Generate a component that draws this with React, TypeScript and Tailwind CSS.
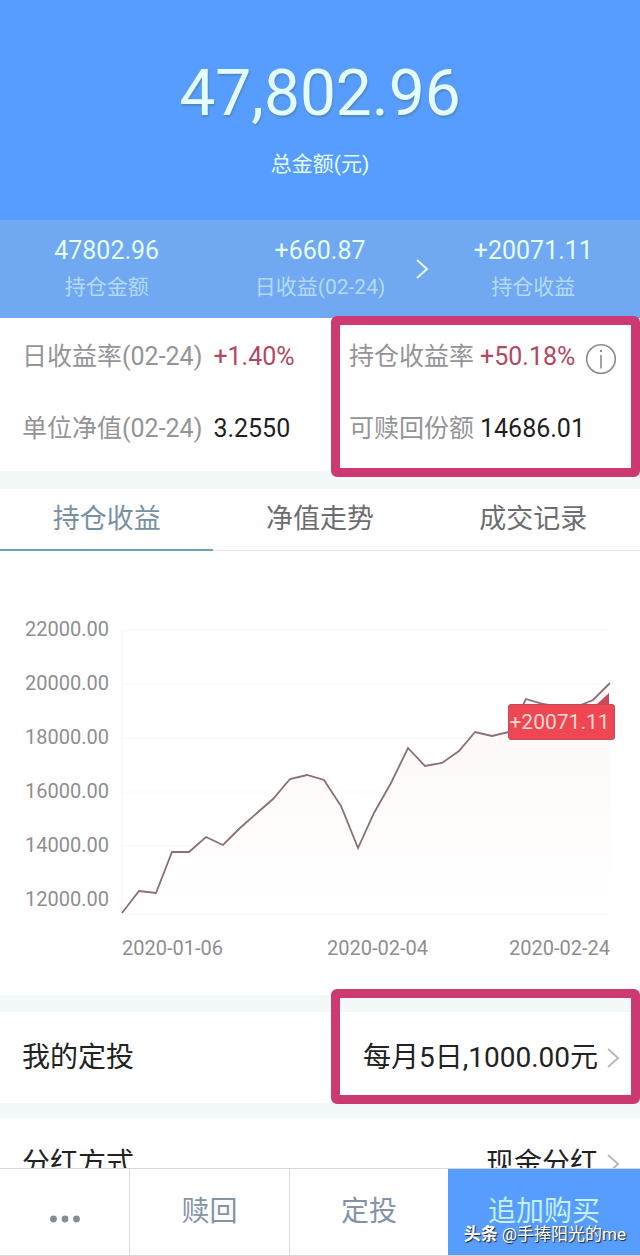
import type { ReactNode } from 'react';

const SUMMARY = [
  { value: '47802.96', label: '持仓金额' },
  { value: '+660.87', label: '日收益(02-24)', hasDetail: true },
  { value: '+20071.11', label: '持仓收益' },
];

const TABS = ['持仓收益', '净值走势', '成交记录'];

const Y_LABELS = ['22000.00', '20000.00', '18000.00', '16000.00', '14000.00', '12000.00'];

// plot area is 488 x 284, one point per trading day
const PLOT_WIDTH = 488;
const PLOT_HEIGHT = 284;
const PROFIT_POINTS = [
  283, 261, 263, 222, 222, 207, 215, 198, 183, 169, 149, 145, 150, 176, 218, 183, 153, 118, 136, 133,
  121, 102, 106, 102, 69, 74, 77, 77, 70, 53,
];
const GRID_LINES = [0, 54, 108, 162, 216, 269];

const LINE = PROFIT_POINTS.map(
  (y, i) => `${Math.round((i * PLOT_WIDTH) / (PROFIT_POINTS.length - 1))},${y}`,
).join(' ');

function Chevron({ className }: { className: string }) {
  return (
    <svg viewBox="0 0 14 22" fill="none" stroke="currentColor" strokeWidth="2" className={className} aria-hidden="true">
      <path d="M2 2l10 9-10 9" />
    </svg>
  );
}

function InfoIcon() {
  return (
    <svg viewBox="0 0 32 32" fill="none" stroke="currentColor" className="h-8 w-8" aria-hidden="true">
      <circle cx="16" cy="16" r="14.3" strokeWidth="1.6" />
      <path d="M16 12v13.5" strokeWidth="1.6" />
      <circle cx="16" cy="8" r="1.2" fill="currentColor" stroke="none" />
    </svg>
  );
}

function Highlight({ className }: { className: string }) {
  return (
    <div className={`pointer-events-none absolute inset-x-0 z-10 rounded-md border-[9px] border-[#cd3a72] ${className}`} />
  );
}

function Metric({ label, value, tone }: { label: string; value: string; tone: string }) {
  return (
    <>
      <span className="text-[#949497]">{label}</span>
      <span className={tone}>{value}</span>
    </>
  );
}

function SettingRow({ label, value, children }: { label: string; value: string; children?: ReactNode }) {
  return (
    <div className="grid h-[91px] shrink-0 grid-cols-[331fr_309fr] bg-white text-[28px] text-[#222]">
      <div className="flex items-center pl-[22px]">{label}</div>
      <div className="relative">
        <button type="button" className="flex h-full w-full items-center justify-end gap-2 whitespace-nowrap pr-5">
          {value}
          <Chevron className="h-[22px] w-[14px] text-[#b9b9b9]" />
        </button>
        {children}
      </div>
    </div>
  );
}

function ProfitChart() {
  return (
    <section className="shrink-0 bg-white pb-[34px] pl-[25px] pr-[30px] pt-[51px] text-[#8e8e91]">
      <div className="flex">
        <div className="w-[97px] shrink-0 text-[20px]">
          {Y_LABELS.map((label) => (
            <div key={label} className="flex h-[54px] items-center">
              {label}
            </div>
          ))}
        </div>
        <div className="relative mt-7 h-[284px] flex-1">
          <svg
            viewBox={`0 0 ${PLOT_WIDTH} ${PLOT_HEIGHT}`}
            preserveAspectRatio="none"
            className="h-full w-full overflow-visible"
            role="img"
            aria-label="持仓收益"
          >
            <g stroke="#faf8f8">
              {GRID_LINES.map((y) => (
                <line key={y} x1="0" x2={PLOT_WIDTH} y1={y} y2={y} />
              ))}
            </g>
            <path d="M0 0V284H488" fill="none" stroke="#f2f1f1" />
            <polygon points={`0,284 ${LINE} 488,284`} fill="url(#profit-fill)" />
            <polyline points={LINE} fill="none" stroke="#8b6f74" strokeWidth="1.8" vectorEffect="non-scaling-stroke" />
            <defs>
              <linearGradient id="profit-fill" x1="0" y1="0" x2="0" y2="1">
                <stop offset="0" stopColor="#fff8f8" />
                <stop offset="1" stopColor="#fffefe" />
              </linearGradient>
            </defs>
          </svg>
          <div className="absolute -right-[5px] top-[74px] h-9 w-[107px] rounded bg-[#ee4652] pr-1 text-center text-[21px] leading-9 text-[#fcd9cf] ring-1 ring-inset ring-[#b9525c]">
            +20071.11
            <svg viewBox="0 0 14 12" className="absolute -top-[11px] right-[5px] h-3 w-[14px]" aria-hidden="true">
              <path d="M0 12L13 0V12z" fill="#c94a56" />
            </svg>
          </div>
        </div>
      </div>
      <div className="mt-[9px] flex pl-[97px] text-[20px] leading-[26px]">
        <span>2020-01-06</span>
        <span className="flex-[109]" />
        <span>2020-02-04</span>
        <span className="flex-[85]" />
        <span>2020-02-24</span>
      </div>
    </section>
  );
}

export default function App() {
  return (
    <div className="flex h-screen flex-col bg-[#f3f8f9] font-['Roboto','Noto_Sans_CJK_SC',sans-serif]">
      <main className="flex min-h-0 flex-1 flex-col overflow-y-auto [scrollbar-width:none]">
        <header className="shrink-0 bg-[#579dff] text-center text-[#e4fdff]">
          <div className="h-[220px] pt-[62px]">
            <h1 className="text-[64px] leading-[64px] [text-shadow:1px_2px_2px_#5088c0]">47,802.96</h1>
            <p className="mt-6 text-[21px] leading-[28px]">总金额(元)</p>
          </div>
          <div className="grid grid-cols-3 bg-[#70a8f1] py-[13px] leading-9">
            {SUMMARY.map((item) => (
              <div key={item.label} className="grid grid-cols-[1fr_auto_1fr] items-center">
                <div className="col-start-2">
                  <div className="text-[25px]">{item.value}</div>
                  <div className="text-[21px] text-[#b5dafb]">{item.label}</div>
                </div>
                {item.hasDetail && <Chevron className="-mr-0.5 h-[22px] w-[14px] justify-self-end" />}
              </div>
            ))}
          </div>
        </header>

        <section className="grid shrink-0 grid-cols-[331fr_309fr] whitespace-nowrap bg-white pb-[6px] pt-[3px] text-[25px]">
          <div className="pl-[22px]">
            <div className="flex h-[72px] items-center gap-[11px]">
              <Metric label="日收益率(02-24)" value="+1.40%" tone="text-[#b4485e]" />
            </div>
            <div className="flex h-[72px] items-center gap-[11px]">
              <Metric label="单位净值(02-24)" value="3.2550" tone="text-[#1f1f1f]" />
            </div>
          </div>
          <div className="relative pl-[18px]">
            <div className="flex h-[72px] items-center gap-1.5">
              <Metric label="持仓收益率" value="+50.18%" tone="text-[#b4485e]" />
              <button type="button" aria-label="收益率说明" className="ml-1 mt-1 text-[#8c8c8f]">
                <InfoIcon />
              </button>
            </div>
            <div className="flex h-[72px] items-center gap-1.5">
              <Metric label="可赎回份额" value="14686.01" tone="text-[#1f1f1f]" />
            </div>
            <Highlight className="-top-[5px] -bottom-3" />
          </div>
        </section>

        <nav className="mt-[18px] grid shrink-0 grid-cols-3 bg-white text-[27px]">
          {TABS.map((tab, i) => (
            <button
              key={tab}
              type="button"
              className={
                i === 0
                  ? 'h-[62px] border-b-2 border-[#6c9fb4] text-[#7890a3]'
                  : 'h-[62px] border-b border-[#e4e7e9] text-[#6c6d71]'
              }
            >
              {tab}
            </button>
          ))}
        </nav>

        <ProfitChart />

        <div className="mt-[17px] flex shrink-0 flex-col gap-[15px]">
          <SettingRow label="我的定投" value="每月5日,1000.00元">
            <Highlight className="-top-[23px] -bottom-px" />
          </SettingRow>
          <SettingRow label="分红方式" value="现金分红" />
        </div>
      </main>

      <footer className="relative grid h-[88px] shrink-0 grid-cols-[129fr_160fr_159fr_192fr] border-y border-[#d5d7da] bg-white text-[28px] text-[#8494a8]">
        <button type="button" aria-label="更多" className="flex items-center justify-center pt-[14px]">
          <svg viewBox="0 0 30 8" fill="#858c98" className="h-2 w-[30px]" aria-hidden="true">
            <circle cx="3.5" cy="4" r="3.4" />
            <circle cx="15" cy="4" r="3.4" />
            <circle cx="26.5" cy="4" r="3.4" />
          </svg>
        </button>
        <button type="button" className="border-l border-[#d5d7da]">
          赎回
        </button>
        <button type="button" className="border-l border-[#d5d7da]">
          定投
        </button>
        <button type="button" className="bg-[#579dff] text-[#c4f0f8]">
          追加购买
        </button>
        <div className="pointer-events-none absolute bottom-[9px] right-[14px] flex gap-1 whitespace-nowrap text-[17px] leading-6 text-white [text-shadow:1px_1px_1px_#222]">
          <b>头条</b>
          <span>@手捧阳光的me</span>
        </div>
      </footer>
    </div>
  );
}
